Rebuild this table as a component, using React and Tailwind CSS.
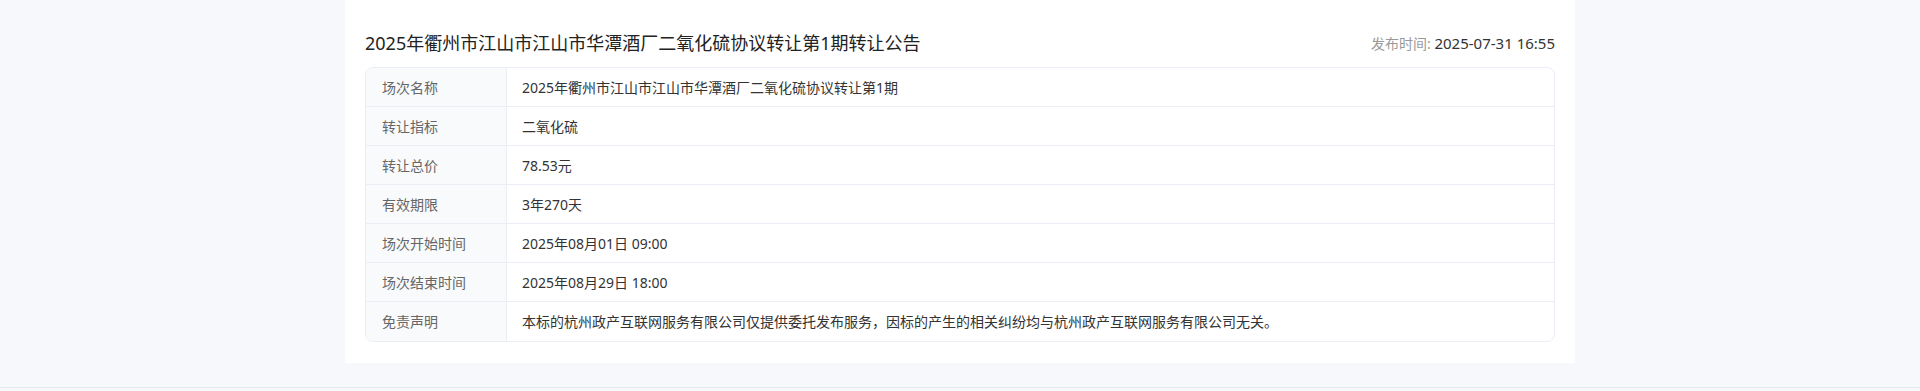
const rows = [
  { label: "场次名称", value: "2025年衢州市江山市江山市华潭酒厂二氧化硫协议转让第1期" },
  { label: "转让指标", value: "二氧化硫" },
  { label: "转让总价", value: "78.53元" },
  { label: "有效期限", value: "3年270天" },
  { label: "场次开始时间", value: "2025年08月01日 09:00" },
  { label: "场次结束时间", value: "2025年08月29日 18:00" },
  {
    label: "免责声明",
    value:
      "本标的杭州政产互联网服务有限公司仅提供委托发布服务，因标的产生的相关纠纷均与杭州政产互联网服务有限公司无关。",
  },
];

export default function App() {
  return (
    <div
      className="min-h-[391px] bg-[#f7f8fb]"
      style={{ fontFamily: '"Noto Sans", "Noto Sans CJK SC", sans-serif' }}
    >
      <div className="mx-auto w-[1230px] bg-white px-5 pt-[30px] pb-[21px]">
        {/* Header */}
        <div className="mb-[11px] flex h-[26px] items-center justify-between">
          <h1 className="text-[18px] leading-[26px] font-normal text-[#222]">
            2025年衢州市江山市江山市华潭酒厂二氧化硫协议转让第1期转让公告
          </h1>
          <div className="leading-[26px]">
            <span className="text-[14px] text-[#999]">发布时间: </span>
            <span className="text-[15px] text-[#333]">2025-07-31 16:55</span>
          </div>
        </div>

        {/* Detail table */}
        <div className="overflow-hidden rounded-lg border border-[#ebeef5]">
          {rows.map((row, i) => (
            <div
              key={row.label}
              className={
                "flex h-[39px] text-[14px] " +
                (i < rows.length - 1 ? "border-b border-[#ebeef5]" : "")
              }
            >
              <div className="flex w-[141px] shrink-0 items-center border-r border-[#ebeef5] bg-[#f9fafc] pl-4 text-[#666]">
                {row.label}
              </div>
              <div className="flex flex-1 items-center pl-[15px] text-[#333]">
                {row.value}
              </div>
            </div>
          ))}
        </div>
      </div>

      {/* footer line */}
      <div className="mt-6 border-t border-[#e6e8ee] h-[5px]" />
    </div>
  );
}
